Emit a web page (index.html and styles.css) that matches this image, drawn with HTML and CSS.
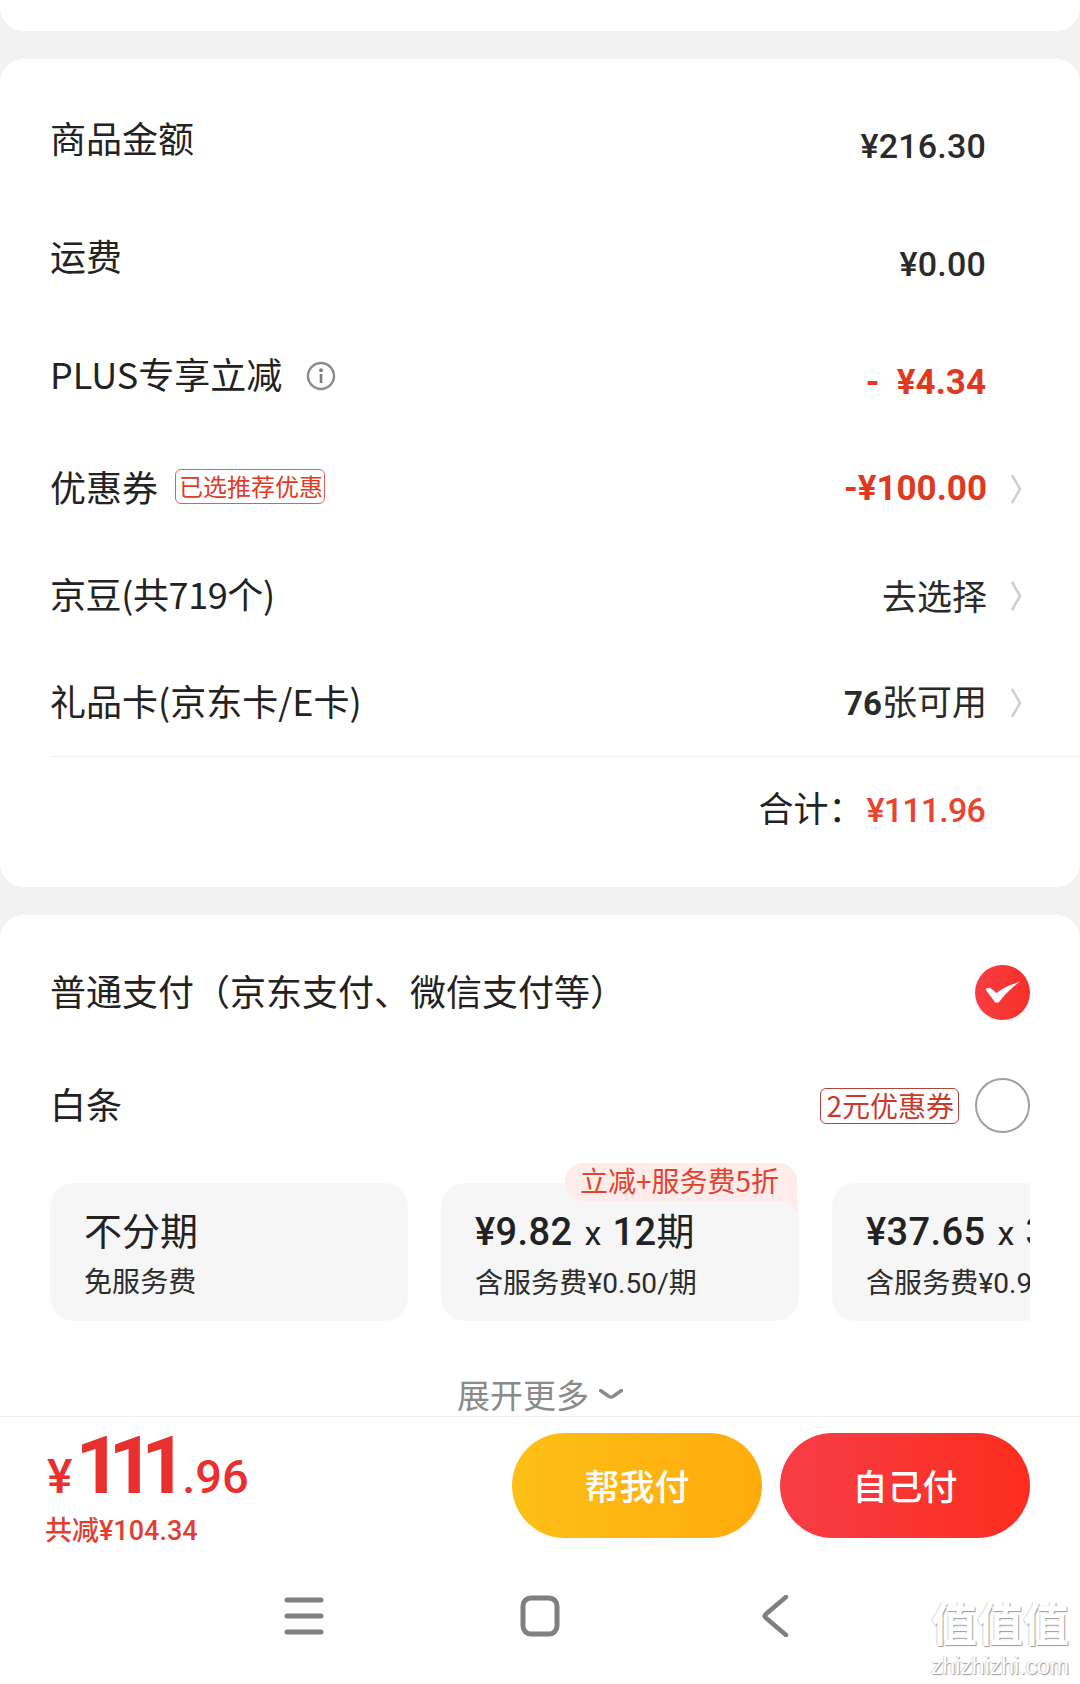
FILE: index.html
```html
<!DOCTYPE html>
<html lang="zh-CN">
<head>
<meta charset="utf-8">
<title>订单结算</title>
<link rel="stylesheet" href="styles.css">
</head>
<body>
<div class="page">
  <div class="card-top"></div>

  <section class="summary">
    <div class="row tall">
      <span class="label">商品金额</span>
      <span class="value">¥216.30</span>
    </div>
    <div class="row tall">
      <span class="label">运费</span>
      <span class="value">¥0.00</span>
    </div>
    <div class="row tall">
      <span class="label">PLUS专享立减</span>
      <svg class="info" viewBox="0 0 30 30" aria-hidden="true">
        <circle cx="15" cy="15" r="13" fill="none" stroke="#8c8c8c" stroke-width="2.4"/>
        <circle cx="15" cy="9.2" r="1.9" fill="#7c7c7c"/>
        <path d="M15 13v9" fill="none" stroke="#7c7c7c" stroke-width="2.6"/>
      </svg>
      <span class="value red">-&nbsp;&nbsp;¥4.34</span>
    </div>
    <div class="row short">
      <span class="label">优惠券</span>
      <span class="tag">已选推荐优惠</span>
      <span class="value red">-¥100.00</span>
      <svg class="chevron" viewBox="0 0 12 30" aria-hidden="true"><path d="M2 1l8 14-8 14" fill="none" stroke="#cfcfcf" stroke-width="2.6"/></svg>
    </div>
    <div class="row short">
      <span class="label beans">京豆(共719个)</span>
      <span class="plain">去选择</span>
      <svg class="chevron" viewBox="0 0 12 30" aria-hidden="true"><path d="M2 1l8 14-8 14" fill="none" stroke="#cfcfcf" stroke-width="2.6"/></svg>
    </div>
    <div class="row short">
      <span class="label">礼品卡(京东卡/E卡)</span>
      <span class="plain"><b class="num">76</b>张可用</span>
      <svg class="chevron" viewBox="0 0 12 30" aria-hidden="true"><path d="M2 1l8 14-8 14" fill="none" stroke="#cfcfcf" stroke-width="2.6"/></svg>
    </div>
    <div class="total">
      <span class="label total-label">合计：</span>
      <span class="total-value">¥111.96</span>
    </div>
  </section>

  <section class="pay">
    <div class="pay-row">
      <span class="label">普通支付（京东支付、微信支付等）</span>
      <svg class="radio" viewBox="0 0 55 55" aria-hidden="true">
        <defs><linearGradient id="redfill" x1="0" x2="1" y1="0" y2="0"><stop offset="0" stop-color="#f83d42"/><stop offset="1" stop-color="#f5302a"/></linearGradient></defs>
        <circle cx="27.5" cy="27.5" r="27.5" fill="url(#redfill)"/>
        <path d="M10.5 24.5Q13 21.5 16 23.6L21.5 28Q30 21 44.5 17Q33.500 25 24.500 36.500Q22 39 19.500 36.500Z" fill="#fff"/>
      </svg>
    </div>
    <div class="pay-row">
      <span class="label">白条</span>
      <span class="coupon">2元优惠券</span>
      <span class="radio-empty"></span>
    </div>
    <div class="plans">
      <div class="plan">
        <div class="plan-title">不分期</div>
        <div class="plan-sub">免服务费</div>
      </div>
      <div class="plan">
        <span class="promo">立减+服务费5折</span>
        <div class="plan-title"><b>¥9.82</b><i class="times">x</i><b>12</b>期</div>
        <div class="plan-sub">含服务费¥0.50/期</div>
      </div>
      <div class="plan">
        <div class="plan-title"><b>¥37.65</b><i class="times">x</i><b>3</b>期</div>
        <div class="plan-sub">含服务费¥0.99/期</div>
      </div>
    </div>
    <div class="expand">
      <span>展开更多</span>
      <svg class="expand-icon" viewBox="0 0 24 10" aria-hidden="true"><path d="M1.500 1.500L10 7.500Q12 8.500 14 7.500L22.500 1.500" fill="none" stroke="#8a8a8a" stroke-width="3.400" stroke-linecap="round"/></svg>
    </div>
  </section>

  <footer class="footer">
    <div class="actions">
      <div class="price">
        <div class="price-main"><span class="yen">¥</span><span class="big">111</span><span class="cents">.96</span></div>
        <div class="saved">共减¥104.34</div>
      </div>
      <div class="btn yellow">帮我付</div>
      <div class="btn redbtn">自己付</div>
    </div>
    <nav class="nav">
      <svg class="nav-icon" viewBox="0 0 40 42" aria-hidden="true"><path d="M3 5h34M3 21h34M3 37h34" stroke="#7f7f7f" stroke-width="5" stroke-linecap="round"/></svg>
      <svg class="nav-icon" viewBox="0 0 40 42" aria-hidden="true"><rect x="3" y="3" width="34" height="36" rx="8" fill="none" stroke="#7f7f7f" stroke-width="5"/></svg>
      <svg class="nav-icon" viewBox="0 0 40 42" aria-hidden="true"><path d="M30 2L9.500 19.500Q8 21 9.500 22.500L30 40" fill="none" stroke="#7f7f7f" stroke-width="4.500" stroke-linecap="round"/></svg>
    </nav>
  </footer>

  <div class="watermark">
    <div class="wm-cn">值值值</div>
    <div class="wm-en">zhizhizhi.com</div>
  </div>
</div>
</body>
</html>
```
FILE: styles.css
```css
* { box-sizing: border-box; }
html, body { margin: 0; padding: 0; }
body {
  width: 1080px;
  height: 1684px;
  overflow: hidden;
  background: #f2f2f2;
  color: #222;
  font-family: "Noto Sans CJK SC", "Noto Sans", sans-serif;
}
.page { position: relative; width: 1080px; height: 1684px; overflow: hidden; }

.card-top {
  height: 31px;
  background: #fff;
  border-radius: 0 0 24px 24px;
}

.summary {
  margin-top: 28px;
  height: 828px;
  padding-top: 22px;
  background: #fff;
  border-radius: 24px;
}
.row {
  display: flex;
  align-items: center;
  padding-left: 50px;
}
.tall { height: 118px; padding-right: 94px; }
.short { height: 107px; padding-right: 58px; }
.label {
  padding-bottom: 6px;
  font-size: 36px;
  line-height: 44px;
  color: #222;
  white-space: nowrap;
}
.beans { letter-spacing: -0.4px; }
.total-label { font-size: 35px; }
.info { width: 30px; height: 30px; margin-left: 24px; flex: none; }
.value {
  margin-left: auto;
  font-family: Roboto, "Noto Sans CJK SC", sans-serif;
  font-weight: 500;
  font-size: 34px;
  letter-spacing: 0.2px;
  line-height: 44px;
  color: #2a2a2a;
  white-space: nowrap;
}
.tall .value { padding-top: 12px; }
.tall .value.red { padding-top: 14px; }
.value.red { color: #df3a1f; font-weight: 700; font-size: 35px; letter-spacing: 0; }
.tag {
  margin: 0 0 4px 17px;
  height: 35px;
  padding: 0 1px 0 3px;
  border: 1px solid #e2604c;
  border-radius: 6px;
  font-size: 24px;
  line-height: 32px;
  color: #e03a28;
  white-space: nowrap;
}
.plain {
  margin-left: auto;
  padding-bottom: 2px;
  font-size: 35px;
  line-height: 44px;
  color: #2a2a2a;
  white-space: nowrap;
}
.num {
  font-family: Roboto, sans-serif;
  font-weight: 700;
  font-size: 33px;
}
.chevron { width: 12px; height: 30px; margin-left: 23px; flex: none; }
.total {
  display: flex;
  justify-content: flex-end;
  align-items: center;
  height: 107px;
  margin-left: 50px;
  padding-right: 95px;
  border-top: 1px solid #efefef;
}
.total-value {
  margin-left: 3px;
  font-family: Roboto, sans-serif;
  font-weight: 500;
  font-size: 34px;
  letter-spacing: -0.8px;
  line-height: 44px;
  color: #e8452f;
}

.pay {
  margin-top: 28px;
  height: 501px;
  padding-top: 21px;
  overflow: hidden;
  background: #fff;
  border-radius: 24px 24px 0 0;
}
.pay-row {
  display: flex;
  align-items: center;
  height: 113px;
  padding: 0 50px 0 50px;
}
.radio { width: 55px; height: 55px; margin-left: auto; flex: none; }
.radio-empty {
  width: 55px;
  height: 55px;
  margin-left: 16px;
  flex: none;
  border: 2px solid #a0a0a0;
  border-radius: 50%;
}
.coupon {
  margin-left: auto;
  height: 36px;
  padding: 0 4px 0 5px;
  border: 1px solid #b5443a;
  border-radius: 6px;
  font-size: 28px;
  line-height: 33px;
  color: #c93a2c;
  white-space: nowrap;
}
.plans {
  display: flex;
  gap: 33px;
  width: 980px;
  margin: -6px 0 0 50px;
  padding-top: 27px;
  overflow: hidden;
}
.plan {
  position: relative;
  flex: none;
  width: 358px;
  height: 138px;
  padding: 27px 0 0 34px;
  background: #f6f6f6;
  border-radius: 24px;
  white-space: nowrap;
}
.plan-title {
  font-family: Roboto, "Noto Sans CJK SC", sans-serif;
  font-size: 38px;
  line-height: 44px;
  color: #222;
}
.plan-title b { font-weight: 500; letter-spacing: 0.4px; }
.times { display: inline-block; font-style: normal; font-size: 34px; margin: 0 11px 0 12px; }
.plan-sub {
  margin-top: 10px;
  font-family: Roboto, "Noto Sans CJK SC", sans-serif;
  font-size: 28px;
  letter-spacing: 0.1px;
  line-height: 38px;
  color: #2c2c2c;
}
.promo {
  position: absolute;
  top: -20px;
  right: 2px;
  width: 232px;
  height: 38px;
  padding-left: 15px;
  background: #fdecea;
  border-radius: 18px 18px 0 18px;
  font-size: 28px;
  line-height: 35px;
  color: #e2432f;
}
.promo::after {
  content: "";
  position: absolute;
  top: 38px;
  right: 0;
  width: 8px;
  height: 13px;
  background: #fdecea;
  clip-path: polygon(0 0, 100% 0, 100% 100%);
}
.expand {
  display: flex;
  justify-content: center;
  align-items: center;
  gap: 10px;
  margin-top: 56px;
  height: 34px;
  font-size: 33px;
  line-height: 34px;
  color: #8a8a8a;
}
.expand-icon { width: 24px; height: 10px; flex: none; }

.footer {
  height: 268px;
  background: #fff;
  border-top: 1px solid #f0f0f0;
}
.actions {
  display: flex;
  gap: 18px;
  padding: 16px 50px 0 45px;
}
.price {
  margin-top: -7px;
  margin-right: auto;
  color: #e8302f;
}
.price-main {
  display: flex;
  align-items: baseline;
  height: 80px;
  padding-left: 2px;
  font-family: Roboto, sans-serif;
  font-weight: 700;
  line-height: 80px;
}
.yen { font-size: 48px; font-weight: 500; margin-right: 3px; }
.big { font-size: 80px; letter-spacing: -13px; margin-right: 13px; }
.cents { font-size: 47px; font-weight: 500; margin-left: -5px; }
.saved {
  margin-top: 5px;
  font-family: Roboto, "Noto Sans CJK SC", sans-serif;
  font-size: 27px;
  font-weight: 500;
  line-height: 40px;
  color: #e04034;
  white-space: nowrap;
}
.btn {
  display: flex;
  justify-content: center;
  align-items: center;
  width: 250px;
  height: 105px;
  padding-bottom: 3px;
  border-radius: 53px;
  font-size: 35px;
  font-weight: 500;
  color: #fff;
}
.yellow { background: linear-gradient(90deg, #fdbf16, #ffac0c); }
.redbtn { background: linear-gradient(90deg, #f73d47, #fc2d1e); }
.nav {
  display: flex;
  justify-content: center;
  gap: 196px;
  margin-top: 44px;
}
.nav-icon { width: 40px; height: 42px; flex: none; }

.watermark {
  position: absolute;
  right: 9px;
  bottom: 6px;
  width: 142px;
  text-align: center;
  color: #fff;
  text-shadow: 1px 1px 1px #9a9a9a, -1px 0 1px #d8d8d8;
}
.wm-cn { font-size: 46px; line-height: 50px; font-weight: 700; white-space: nowrap; }
.wm-en { margin-top: 8px; font-family: "Liberation Sans", sans-serif; font-size: 23px; line-height: 24px; white-space: nowrap; }
```
